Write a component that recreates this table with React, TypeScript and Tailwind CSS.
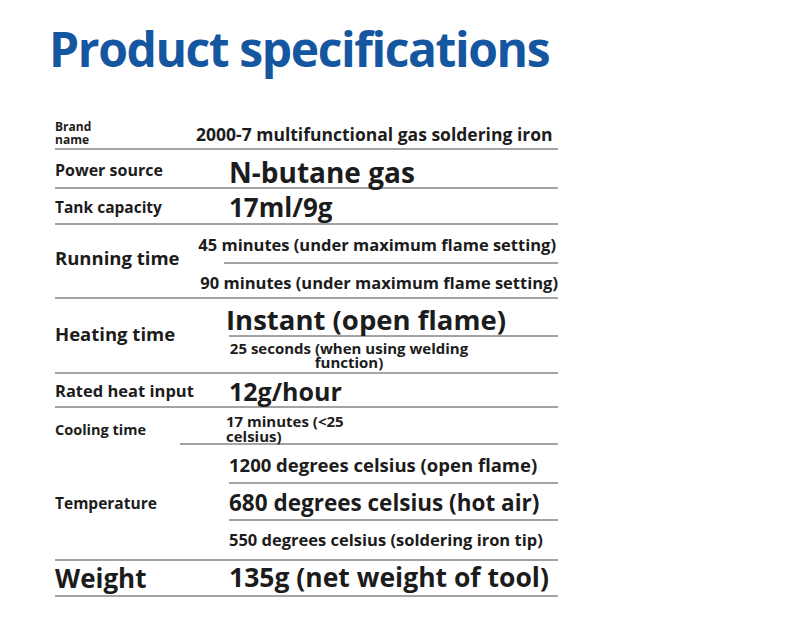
const font = { fontFamily: '"Open Sans", "Noto Sans", sans-serif' };

export default function App() {
    return (
        <main className="w-[790px] h-[619px] bg-white text-[#1c1c1c] overflow-hidden" style={font}>
            <h1 className="pt-[25px] pl-[49px] text-[48px] leading-[48px] font-bold text-[#1556a0] tracking-[-1.4px]">
                Product specifications
            </h1>

            <div className="mt-[45px] ml-[55px] w-[503px]">
                {/* Brand name */}
                <div className="flex items-center h-[32px] border-b-2 border-[#a3a3a3]">
                    <div className="w-[141px] font-bold">
                        <div className="h-[13px] text-[12px] leading-[13px]">Brand</div>
                        <div className="h-[13px] text-[12px] leading-[13px]">name</div>
                    </div>
                    <div className="text-[17.5px] font-bold whitespace-nowrap pt-[3px]">
                        2000-7 multifunctional gas soldering iron
                    </div>
                </div>

                {/* Power source */}
                <div className="flex items-center h-[39px] border-b-2 border-[#a3a3a3]">
                    <div className="w-[174px] text-[16px] font-bold pt-[2px]">Power source</div>
                    <div className="text-[28px] font-bold pt-[6px]">N-butane gas</div>
                </div>

                {/* Tank capacity */}
                <div className="flex items-center h-[36px] border-b-2 border-[#a3a3a3]">
                    <div className="w-[174px] text-[15.5px] font-bold pt-[4px]">Tank capacity</div>
                    <div className="text-[26px] font-bold pt-[2px]">17ml/9g</div>
                </div>

                {/* Running time */}
                <div className="flex h-[74px] border-b-2 border-[#a3a3a3]">
                    <div className="w-[174px] flex items-center text-[18.5px] font-bold pb-[6px]">Running time</div>
                    <div className="flex-1 flex flex-col">
                        <div className="h-[39px] border-b-2 border-[#a3a3a3] flex items-center pt-[3px]">
                            <span className="-ml-[26px] text-[16.5px] font-bold whitespace-nowrap">
                                45 minutes (under maximum flame setting)
                            </span>
                        </div>
                        <div className="h-[33px] flex items-center pt-[5px]">
                            <span className="-ml-[24px] text-[16.5px] font-bold whitespace-nowrap">
                                90 minutes (under maximum flame setting)
                            </span>
                        </div>
                    </div>
                </div>

                {/* Heating time */}
                <div className="flex h-[75px] border-b-2 border-[#a3a3a3]">
                    <div className="w-[174px] flex items-center text-[18.5px] font-bold pb-[3px]">Heating time</div>
                    <div className="flex-1 flex flex-col">
                        <div className="h-[38px] border-b-2 border-[#a3a3a3] flex items-center">
                            <span className="-ml-[3px] text-[27.5px] font-bold whitespace-nowrap pt-[6px]">
                                Instant (open flame)
                            </span>
                        </div>
                        <div className="h-[35px] flex flex-col justify-center pt-[1px]">
                            <div className="w-[240px] text-center text-[15px] leading-[14px] font-bold">
                                25 seconds (when using welding function)
                            </div>
                        </div>
                    </div>
                </div>

                {/* Rated heat input */}
                <div className="flex items-center h-[34px] border-b-2 border-[#a3a3a3]">
                    <div className="w-[174px] text-[16.5px] font-bold pt-[2px]">Rated heat input</div>
                    <div className="text-[25px] font-bold pt-[4px]">12g/hour</div>
                </div>

                {/* Cooling time */}
                <div className="flex h-[37px]">
                    <div className="w-[125px] flex items-center text-[14.5px] font-bold pt-[6px]">Cooling time</div>
                    <div className="flex-1 border-b-2 border-[#a3a3a3] flex items-center pt-[6px]">
                        <div className="ml-[46px] w-[130px] text-[15px] leading-[15px] font-bold">
                            17 minutes (&lt;25 celsius)
                        </div>
                    </div>
                </div>

                {/* Temperature */}
                <div className="flex h-[116px] border-b-2 border-[#a3a3a3]">
                    <div className="w-[174px] flex items-center text-[15.5px] font-bold pt-[3px]">Temperature</div>
                    <div className="flex-1 flex flex-col">
                        <div className="h-[39px] border-b-2 border-[#a3a3a3] flex items-center pt-[2px]">
                            <span className="text-[18.5px] font-bold whitespace-nowrap">
                                1200 degrees celsius (open flame)
                            </span>
                        </div>
                        <div className="h-[37px] border-b-2 border-[#a3a3a3] flex items-center pt-[2px]">
                            <span className="text-[22.5px] font-bold whitespace-nowrap">
                                680 degrees celsius (hot air)
                            </span>
                        </div>
                        <div className="h-[38px] flex items-center">
                            <span className="text-[16.5px] font-bold whitespace-nowrap">
                                550 degrees celsius (soldering iron tip)
                            </span>
                        </div>
                    </div>
                </div>

                {/* Weight */}
                <div className="flex items-center h-[36px] border-b-2 border-[#a3a3a3]">
                    <div className="w-[174px] text-[26px] font-bold">Weight</div>
                    <div className="text-[26.5px] font-bold whitespace-nowrap">135g (net weight of tool)</div>
                </div>
            </div>
        </main>
    );
}
